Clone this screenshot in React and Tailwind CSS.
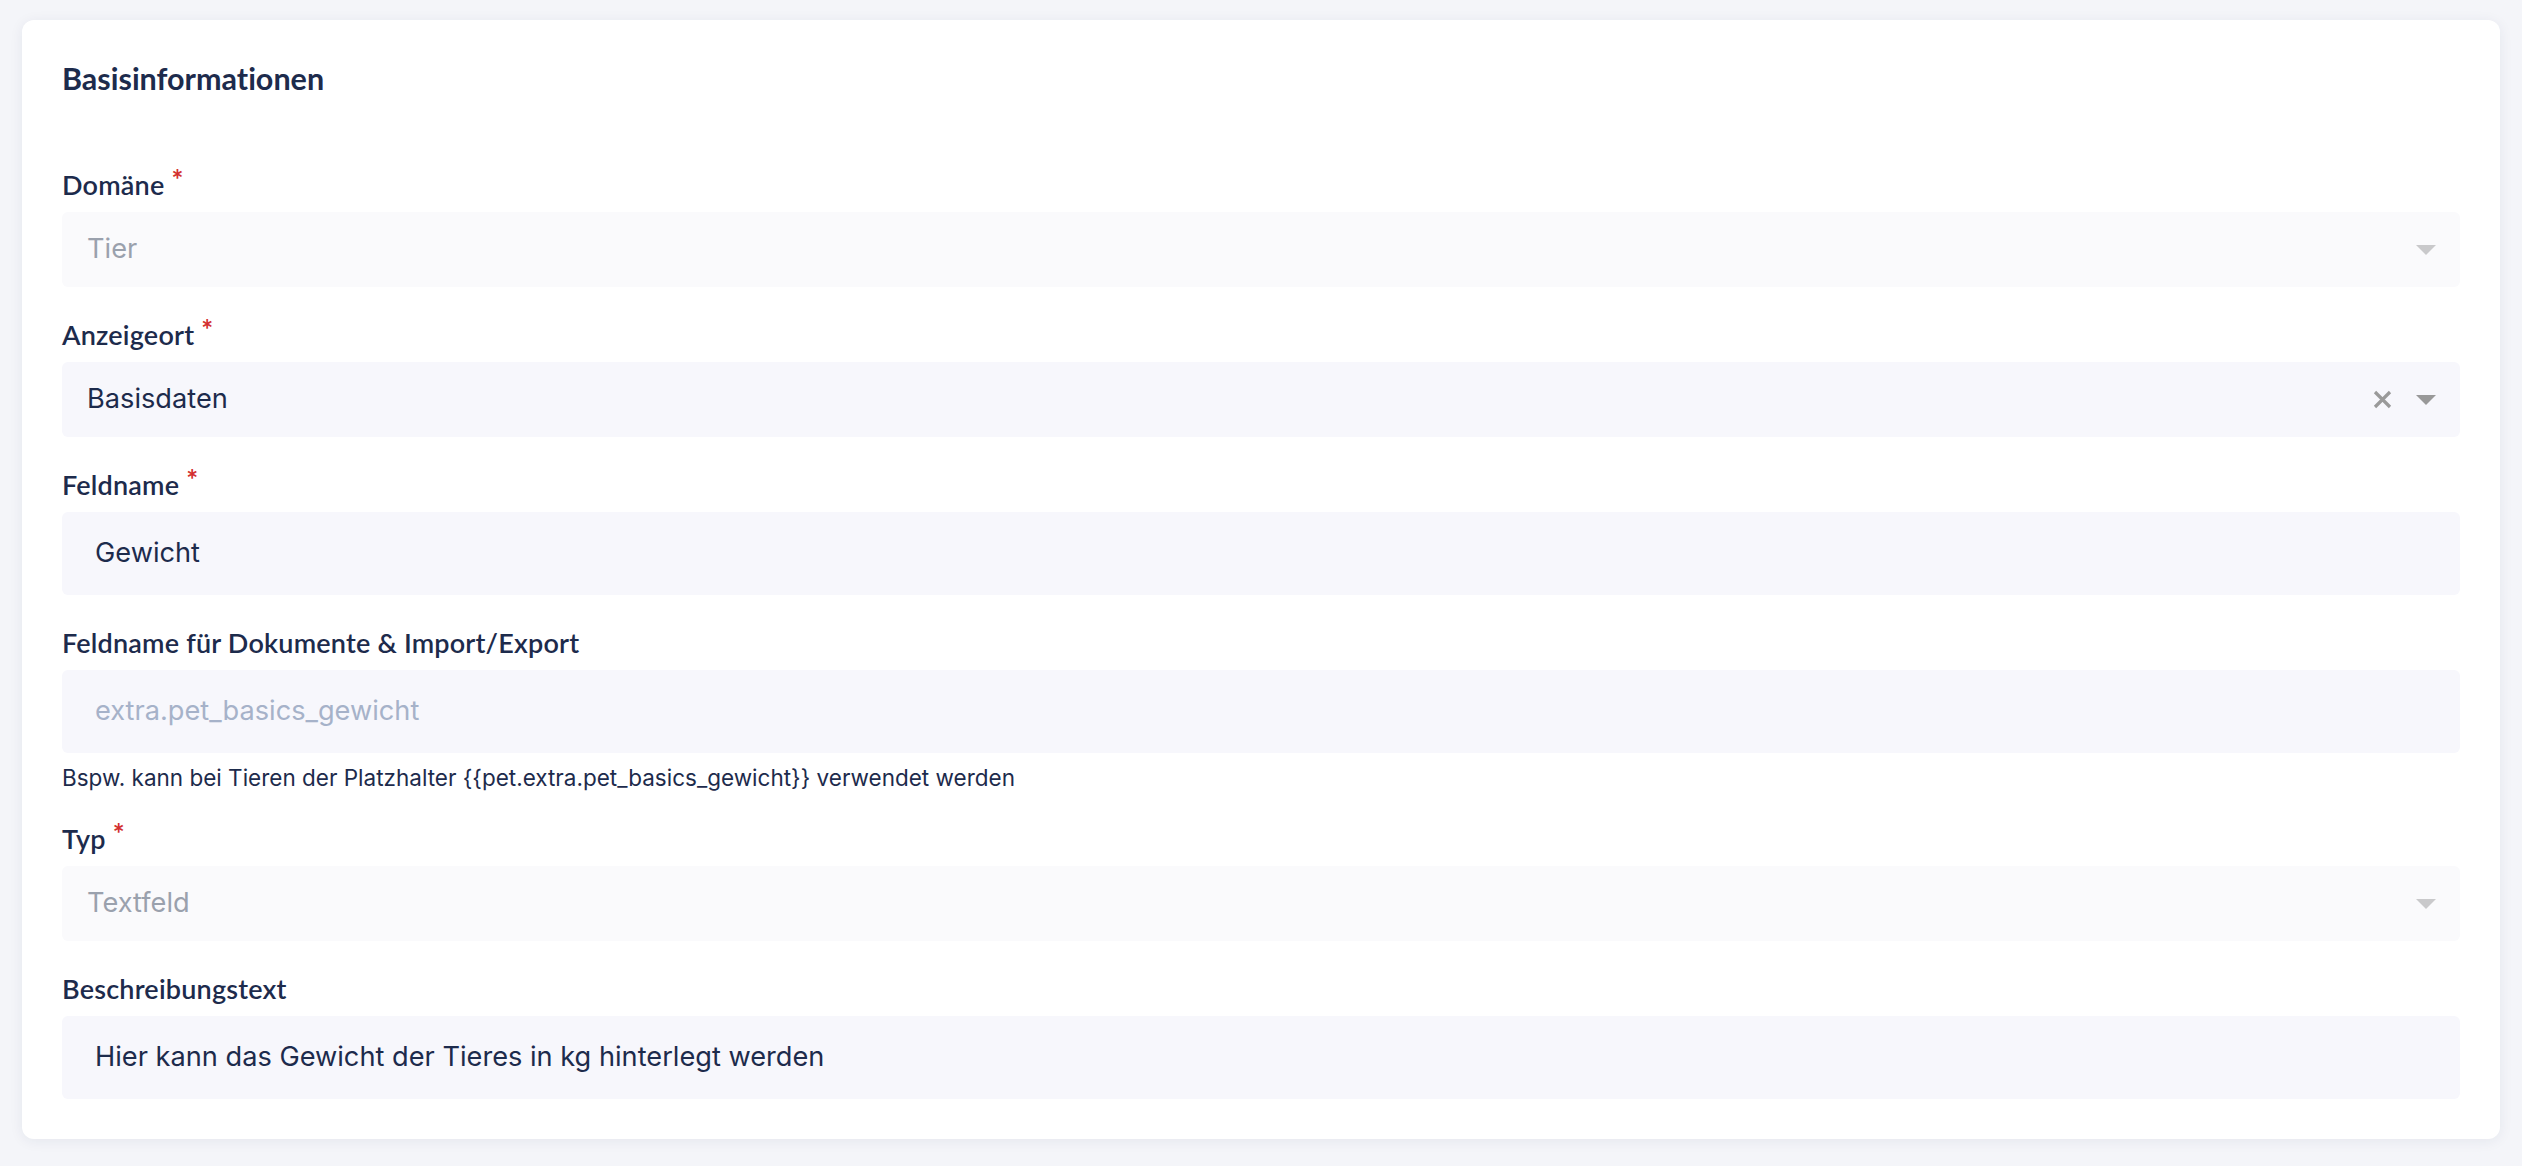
import React from "react";

const label = "font-['Lato','Noto_Sans',sans-serif] font-semibold text-[27px] tracking-[0.2px] text-[#1d2b4c]";
const field = "font-['Inter','Noto_Sans',sans-serif] text-[27.2px]";

const Caret = ({ muted }) => (
  <svg width="20" height="10" viewBox="0 0 20 10" className="shrink-0">
    <path d="M0 0h20L10 10z" fill={muted ? "#c9c9cb" : "#999999"} />
  </svg>
);

const ClearIcon = () => (
  <svg width="19" height="19" viewBox="0 0 19 19" className="shrink-0">
    <path d="M2 2l15 15M17 2L2 17" stroke="#9a9a9a" strokeWidth="3.2" />
  </svg>
);

const Label = ({ children, required }) => (
  <div className="h-[32px] mb-[11px] flex items-center">
    <span className={label}>{children}</span>
    {required && (
      <span className="self-start -mt-[4px] ml-[7px] text-[#d3302f] text-[28px] font-bold leading-none font-['Lato',sans-serif]">
        *
      </span>
    )}
  </div>
);

const Select = ({ value, disabled, clearable }) => (
  <div
    className={`h-[75px] rounded-[6px] flex items-center pl-[25px] pr-[24px] ${
      disabled ? "bg-[#fafafc]" : "bg-[#f7f7fc]"
    }`}
  >
    <span className={`${field} flex-1 ${disabled ? "text-[#9aa1ad]" : "text-[#1d2b4c]"}`}>{value}</span>
    {clearable && (
      <span className="mr-[24px] flex">
        <ClearIcon />
      </span>
    )}
    <Caret muted={disabled} />
  </div>
);

const TextInput = ({ value, readOnly }) => (
  <div className="h-[83px] rounded-[6px] flex items-center px-[33px] bg-[#f7f7fc]">
    <span className={`${field} ${readOnly ? "text-[#a6b2c9]" : "text-[#1d2b4c]"}`}>{value}</span>
  </div>
);

export default function App() {
  return (
    <div className="min-h-screen bg-[#f4f5f9] px-[22px] pt-[20px] pb-[27px]">
      <div className="bg-white rounded-[12px] shadow-[0_2px_14px_rgba(30,40,80,0.07)] px-[40px] pt-[38px] pb-[40px]">
        <h2 className="font-['Lato','Noto_Sans',sans-serif] font-bold text-[30.5px] leading-[40px] text-[#1d2b4c] [font-variant-ligatures:none] mb-[71px]">
          Basisinformationen
        </h2>

        <div className="flex flex-col gap-[32px]">
          <div>
            <Label required>Domäne</Label>
            <Select value="Tier" disabled />
          </div>

          <div>
            <Label required>Anzeigeort</Label>
            <Select value="Basisdaten" clearable />
          </div>

          <div>
            <Label required>Feldname</Label>
            <TextInput value="Gewicht" />
          </div>

          <div>
            <Label>Feldname für Dokumente &amp; Import/Export</Label>
            <TextInput value="extra.pet_basics_gewicht" readOnly />
            <p className="mt-[12px] leading-[26px] font-['Inter','Noto_Sans',sans-serif] text-[22.5px] text-[#1d2b4c]">
              Bspw. kann bei Tieren der Platzhalter {"{{pet.extra.pet_basics_gewicht}}"} verwendet werden
            </p>
          </div>

          <div>
            <Label required>Typ</Label>
            <Select value="Textfeld" disabled />
          </div>

          <div>
            <Label>Beschreibungstext</Label>
            <TextInput value="Hier kann das Gewicht der Tieres in kg hinterlegt werden" />
          </div>
        </div>
      </div>
    </div>
  );
}
